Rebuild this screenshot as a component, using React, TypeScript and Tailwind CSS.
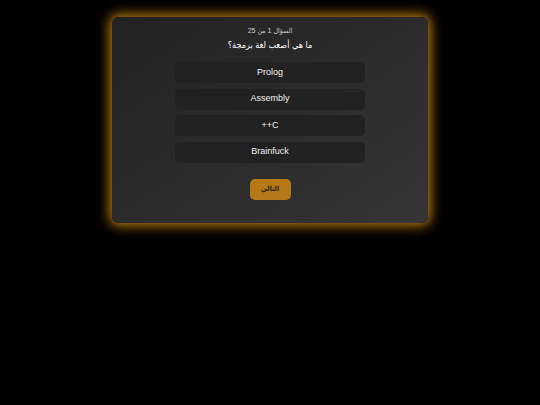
import React from "react";

const options = ["Prolog", "Assembly", "C++", "Brainfuck"];

export default function App() {
  return (
    <div
      dir="rtl"
      className="w-[540px] h-[405px] bg-black pt-[17px]"
      style={{ fontFamily: '"Liberation Sans", "DejaVu Sans", sans-serif' }}
    >
      <div className="mx-auto w-[316px] h-[206px] rounded-[7px] bg-gradient-to-br from-[#222222] to-[#353535] shadow-[0_0_12px_3px_rgba(214,140,16,0.85)] pt-[8px] flex flex-col items-center">
        <div className="text-[7px] leading-[12px] text-[#d0d0d0] font-['Liberation_Sans','DejaVu_Sans_Condensed',sans-serif]">السؤال 1 من 25</div>
        <div className="text-[9px] leading-[14px] text-white mt-[1px] font-['Liberation_Sans','DejaVu_Sans_Condensed',sans-serif]">ما هي أصعب لغة برمجة؟</div>
        <div className="mt-[10px] flex flex-col gap-[5.5px] w-[190px]">
          {options.map((o) => (
            <button
              key={o}
              className="h-[21px] w-full rounded-[5px] bg-[#212121] text-[9px] text-[#f0f0f0]"
            >
              {o}
            </button>
          ))}
        </div>
        <button className="mt-[16px] h-[21px] w-[41px] rounded-[5px] bg-[#b57a17] text-[7px] font-bold text-[#2a1c05] font-['Liberation_Sans','DejaVu_Sans_Condensed',sans-serif]">
          التالي
        </button>
      </div>
    </div>
  );
}
